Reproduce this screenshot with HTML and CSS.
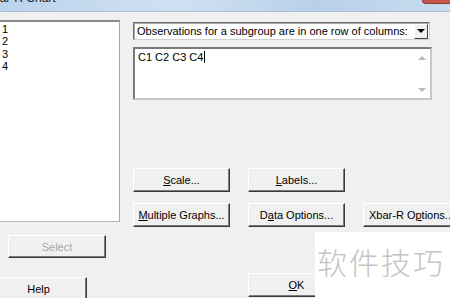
FILE: index.html
```html
<!DOCTYPE html>
<html lang="en">
<head>
  <meta charset="UTF-8" />
  <title>Xbar-R Chart</title>
  <link rel="stylesheet" href="styles.css">
</head>
<body>
  <div class="titlebar">
    <span class="title">Xbar-R Chart</span>
    <span class="close"></span>
  </div>

  <div class="dialog">
    <div class="left">
      <div class="listbox">
        <div>1</div>
        <div>2</div>
        <div>3</div>
        <div>4</div>
      </div>
      <button class="btn select" disabled>Select</button>
      <button class="btn help">Help</button>
    </div>

    <div class="right">
      <div class="combo">
        <span>Observations for a subgroup are in one row of columns:</span>
        <span class="drop"><span class="arrow-down"></span></span>
      </div>

      <div class="memo">
        <div class="memo-text">C1 C2 C3 C4<span class="caret"></span></div>
        <div class="vscroll">
          <span class="tri-up"></span>
          <span class="tri-down"></span>
        </div>
      </div>

      <div class="btns">
        <button class="btn"><u>S</u>cale...</button>
        <button class="btn"><u>L</u>abels...</button>
        <div></div>
        <button class="btn"><u>M</u>ultiple Graphs...</button>
        <button class="btn">D<u>a</u>ta Options...</button>
        <button class="btn">Xbar-R O<u>p</u>tions...</button>
        <button class="btn ok"><u>O</u>K</button>
      </div>
    </div>
  </div>

  <div class="watermark">软件技巧</div>
</body>
</html>
```

FILE: styles.css
```css
body {
  margin: 0;
  width: 450px;
  height: 298px;
  overflow: hidden;
  position: relative;
  background: #f0f0f0;
  font-family: "Liberation Sans", Arial, sans-serif;
  font-size: 11px;
  color: #000;
}

.titlebar {
  height: 11px;
  display: flex;
  justify-content: space-between;
  align-items: flex-start;
  overflow: hidden;
  background: linear-gradient(90deg, #bcd3ec, #cfe0f2 40%, #b9d0ea 70%, #c8dbef);
  border-bottom: 1px solid #a9bfd8;
}

.title {
  display: block;
  margin-left: -15px;
  margin-top: -9px;
  font-size: 12px;
  line-height: 14px;
  color: #1e1e1e;
}

.close {
  display: block;
  width: 27px;
  height: 3px;
  margin-right: -1px;
  background: #c7544b;
  border: 1px solid #8d3a33;
  border-top: none;
  border-radius: 0 0 0 4px;
}

.dialog {
  display: flex;
  padding-top: 8px;
}

.left {
  width: 120px;
  display: flex;
  flex-direction: column;
  align-items: flex-start;
}

.listbox {
  box-sizing: border-box;
  width: 130px;
  height: 202px;
  margin-left: -10px;
  padding: 1px 0 0 10px;
  line-height: 12.3px;
  background: #fff;
  border-top: 2px solid #8c8c8c;
  border-left: 2px solid #8c8c8c;
  border-right: 1px solid #a8a8a8;
  border-bottom: 1px solid #b4b4b4;
}

.btn {
  box-sizing: border-box;
  font-family: inherit;
  font-size: 11px;
  color: #000;
  background: #f0f0f0;
  padding: 0;
  border: 1px solid;
  border-color: #fff #3a3a3a #3a3a3a #fff;
  box-shadow: inset -1px -1px #7c7c7c;
  width: 97px;
  height: 24px;
}

.select {
  width: 98px;
  height: 23px;
  margin: 13px 0 0 8px;
  color: #a8a8a8;
}

.help {
  margin: 19px 0 0 -10px;
}

.right {
  margin-left: 13px;
  padding-top: 2px;
}

.combo {
  box-sizing: border-box;
  width: 297px;
  height: 18px;
  display: flex;
  justify-content: space-between;
  align-items: center;
  padding-left: 3px;
  background: #fff;
  border: 1px solid;
  border-color: #6e6e6e #d0d0d0 #d0d0d0 #6e6e6e;
  box-shadow: inset 1px 1px #a8a8a8;
}

.drop {
  box-sizing: border-box;
  width: 14px;
  height: 15px;
  margin-right: 1px;
  display: flex;
  justify-content: center;
  align-items: center;
  background: #f0f0f0;
  border: 1px solid;
  border-color: #fff #404040 #404040 #fff;
}

.arrow-down {
  width: 0;
  height: 0;
  border-left: 4px solid transparent;
  border-right: 4px solid transparent;
  border-top: 4px solid #000;
}

.memo {
  box-sizing: border-box;
  width: 299px;
  height: 53px;
  margin-top: 7px;
  display: flex;
  background: #fff;
  border: 2px solid;
  border-color: #7a7a7a #c8c8c8 #c8c8c8 #7a7a7a;
}

.memo-text {
  flex: 1;
  padding: 2px 0 0 3px;
  line-height: 13px;
}

.caret {
  display: inline-block;
  width: 1px;
  height: 12px;
  margin-left: 1px;
  vertical-align: -2px;
  background: #000;
}

.vscroll {
  width: 14px;
  margin-right: 1px;
  display: flex;
  flex-direction: column;
  justify-content: space-between;
  align-items: center;
  padding: 7px 0 6px;
}

.tri-up {
  width: 0;
  height: 0;
  border-left: 4px solid transparent;
  border-right: 4px solid transparent;
  border-bottom: 4px solid #b8b8b8;
}

.tri-down {
  width: 0;
  height: 0;
  border-left: 4px solid transparent;
  border-right: 4px solid transparent;
  border-top: 4px solid #b8b8b8;
}

.btns {
  display: grid;
  grid-template-columns: repeat(3, 97px);
  grid-auto-rows: 24px;
  column-gap: 18px;
  row-gap: 11px;
  margin-top: 68px;
}

.btns .btn {
  white-space: nowrap;
}

.ok {
  grid-column: 2;
  margin-top: 35px;
}

.watermark {
  position: absolute;
  left: 315px;
  top: 232px;
  width: 135px;
  height: 66px;
  box-sizing: border-box;
  padding: 14px 0 0 2px;
  background: #fff;
  font-family: "Noto Sans CJK SC", sans-serif;
  font-weight: 300;
  font-size: 30px;
  line-height: 30px;
  letter-spacing: 2px;
  color: #c4c4c4;
  white-space: nowrap;
}
```
